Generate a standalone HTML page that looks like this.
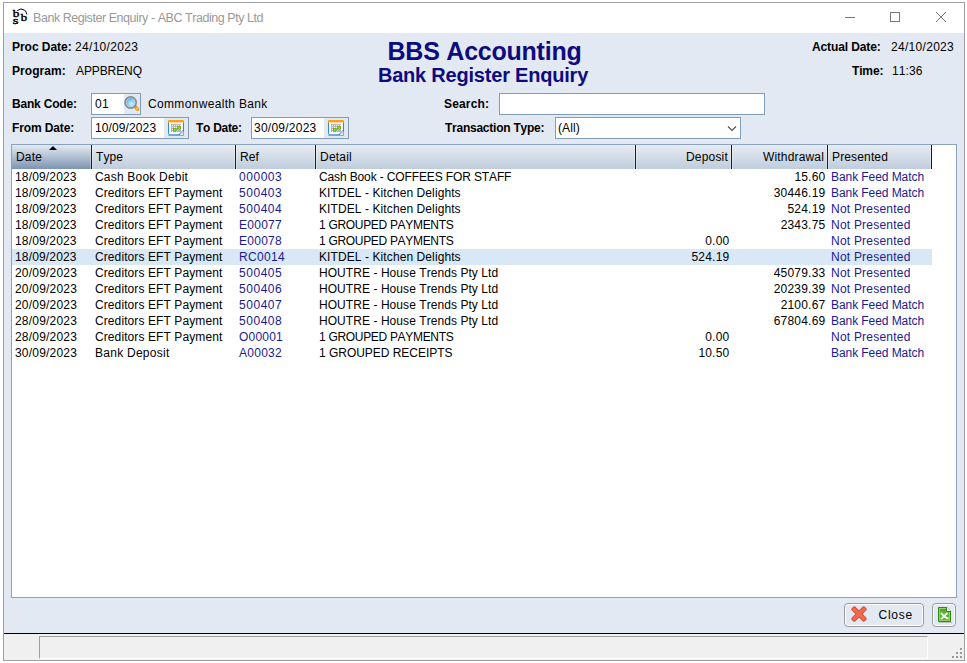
<!DOCTYPE html>
<html><head><meta charset="utf-8">
<style>
html,body{margin:0;padding:0;background:#fff;}
body{font-kerning:none;font-variant-ligatures:none;width:967px;height:663px;position:relative;overflow:hidden;font-family:"Liberation Sans",sans-serif;font-size:12px;color:#000;}
.a{position:absolute;white-space:nowrap;line-height:16px;}
.bd{font-weight:bold;}
#win{position:absolute;left:3px;top:2px;width:960px;height:657px;border:1px solid #a0a0a0;background:#fff;}
#panel{position:absolute;left:4px;top:33px;width:960px;height:600px;background:#e3e9f2;}
#status{position:absolute;left:4px;top:634px;width:960px;height:26px;background:#f0f0f0;}
#blk{position:absolute;left:4px;top:633px;width:960px;height:1px;background:#000;}
.inp{position:absolute;background:#fff;border:1px solid #7f9db9;box-sizing:border-box;}
.ibg{position:absolute;background:#e3e9f2;}
#tbl{position:absolute;left:11px;top:144px;width:946px;height:454px;box-sizing:border-box;border:1px solid #8ba3bf;background:#fff;overflow:hidden;}
.hs,.hn,.sep,.sel,.c{position:absolute;}
.hs{top:145px;height:24px;background:linear-gradient(#e4eaf2,#7d95b1);}
.hn{top:145px;height:24px;background:linear-gradient(#e6ebf2,#bfcddc);}
.sep{top:145px;width:1px;height:24px;background:#1a1a1a;box-shadow:-1px 0 0 rgba(255,255,255,0.3),1px 0 0 rgba(255,255,255,0.35);}
.sel{left:12px;width:920px;height:16px;background:#d8e8f6;}
.t{position:absolute;white-space:nowrap;line-height:16px;}
.b{color:#1c1c8e;}
.btn{position:absolute;box-sizing:border-box;border:1px solid #9a9a9a;border-radius:4px;box-shadow:inset 0 0 0 1px #fff;background:#e3e9f2;}
</style></head><body>
<div id="win"></div>
<!-- title -->
<svg style="position:absolute;left:8px;top:6px" width="24" height="22" viewBox="0 0 24 22">
 <g font-family="Liberation Serif" font-size="11" stroke="#000" stroke-width="0.45">
 <text transform="translate(4.7 10.9) scale(1.2 1)">b</text>
 <text transform="translate(4.8 17.7) scale(1.35 0.95)">s</text>
 <text transform="translate(12.8 14.7) scale(1.15 0.95)">b</text>
 </g>
 <path d="M9.3 4.6 Q13 1.6 16.5 4 Q18.3 5.6 18.9 8.5" fill="none" stroke="#000" stroke-width="1"/>
</svg>
<svg style="position:absolute;left:840px;top:6px" width="120" height="22">
 <line x1="5" y1="11.5" x2="15" y2="11.5" stroke="#777" stroke-width="1"/>
 <rect x="50.5" y="6.5" width="9" height="9" fill="none" stroke="#777" stroke-width="1"/>
 <line x1="96" y1="6" x2="106" y2="16" stroke="#777" stroke-width="1"/>
 <line x1="106" y1="6" x2="96" y2="16" stroke="#777" stroke-width="1"/>
</svg>
<div id="panel"></div>
<div id="blk"></div>
<div id="status"></div>
<div style="position:absolute;left:39px;top:636px;width:889px;height:23px;border-top:1px solid #a0a0a0;border-left:1px solid #a0a0a0;border-right:1px solid #fff;border-bottom:1px solid #fff;box-sizing:border-box;"></div>
<svg style="position:absolute;left:950px;top:646px" width="14" height="14">
 <g fill="#9a9a9a"><rect x="10" y="2" width="2" height="2"/><rect x="6" y="6" width="2" height="2"/><rect x="10" y="6" width="2" height="2"/><rect x="2" y="10" width="2" height="2"/><rect x="6" y="10" width="2" height="2"/><rect x="10" y="10" width="2" height="2"/></g>
</svg>

<!-- header info -->

<!-- filters -->
<div class="inp" style="left:91px;top:93px;width:50px;height:22px;"></div>
<div class="ibg" style="left:124px;top:94px;width:16px;height:20px;"></div>
<svg style="position:absolute;left:120px;top:92px" width="24" height="24" viewBox="0 0 24 24">
 <defs><radialGradient id="lg" cx="0.6" cy="0.65" r="0.75"><stop offset="0" stop-color="#c4f2ff"/><stop offset="0.55" stop-color="#8cd0f4"/><stop offset="1" stop-color="#3f97e0"/></radialGradient></defs>
 <path d="M15.3 14.8 L17.6 17.2" stroke="#e39a22" stroke-width="3.4" stroke-linecap="round"/>
 <circle cx="17" cy="16.5" r="0.9" fill="#ffd070"/>
 <circle cx="10.6" cy="10.5" r="5.6" fill="#fff" stroke="#8a8a8a" stroke-width="1.7"/>
 <circle cx="10.6" cy="10.5" r="4.4" fill="url(#lg)"/>
</svg>

<div class="inp" style="left:91px;top:117px;width:98px;height:22px;"></div>
<div class="ibg" style="left:164px;top:118px;width:24px;height:20px;"></div>
<svg style="position:absolute;left:168px;top:120px" width="16" height="16" viewBox="0 0 16 16">
 <rect x="0" y="15" width="16" height="1" fill="#b0b0b0"/>
 <rect x="0.5" y="1" width="15" height="13.8" rx="1.5" fill="#fff" stroke="#2f88cc"/>
 <rect x="0" y="0" width="16" height="3" rx="1.2" fill="#f9a11b"/>
 <rect x="1" y="2" width="14" height="1" fill="#ffd79a"/>
 <rect x="3" y="4" width="10" height="8" fill="#b4b4c4"/>
 <g fill="#f4f4ff"><rect x="4" y="5" width="1" height="1"/><rect x="6" y="5" width="1" height="1"/><rect x="8" y="5" width="1" height="1"/><rect x="4" y="7" width="1" height="1"/><rect x="6" y="7" width="1" height="1"/><rect x="8" y="7" width="1" height="1"/><rect x="4" y="9" width="1" height="1"/><rect x="10" y="5" width="1" height="1"/><rect x="12" y="5" width="1" height="1"/><rect x="10" y="9" width="1" height="1"/><rect x="12" y="9" width="1" height="1"/><rect x="4" y="11" width="1" height="1"/><rect x="8" y="11" width="1" height="1"/></g>
 <rect x="5" y="8" width="3.5" height="3.5" fill="#6cb400"/><rect x="6" y="9" width="1.5" height="1.5" fill="#b0e040"/>
 <rect x="9.3" y="6" width="3.5" height="3.5" fill="#6cb400"/><rect x="10.3" y="7" width="1.5" height="1.5" fill="#b0e040"/>
 <path d="M11 16 L16 11 L16 16 Z" fill="#a8a8a8"/>
 <path d="M10.5 15 L15.5 10" stroke="#2f88cc" stroke-width="1"/>
 <path d="M12 15 L15 12 L15 15 Z" fill="#e8e8e8"/>
</svg>
<div class="inp" style="left:251px;top:117px;width:98px;height:22px;"></div>
<div class="ibg" style="left:324px;top:118px;width:24px;height:20px;"></div>
<svg style="position:absolute;left:328px;top:120px" width="16" height="16" viewBox="0 0 16 16">
 <rect x="0" y="15" width="16" height="1" fill="#b0b0b0"/>
 <rect x="0.5" y="1" width="15" height="13.8" rx="1.5" fill="#fff" stroke="#2f88cc"/>
 <rect x="0" y="0" width="16" height="3" rx="1.2" fill="#f9a11b"/>
 <rect x="1" y="2" width="14" height="1" fill="#ffd79a"/>
 <rect x="3" y="4" width="10" height="8" fill="#b4b4c4"/>
 <g fill="#f4f4ff"><rect x="4" y="5" width="1" height="1"/><rect x="6" y="5" width="1" height="1"/><rect x="8" y="5" width="1" height="1"/><rect x="4" y="7" width="1" height="1"/><rect x="6" y="7" width="1" height="1"/><rect x="8" y="7" width="1" height="1"/><rect x="4" y="9" width="1" height="1"/><rect x="10" y="5" width="1" height="1"/><rect x="12" y="5" width="1" height="1"/><rect x="10" y="9" width="1" height="1"/><rect x="12" y="9" width="1" height="1"/><rect x="4" y="11" width="1" height="1"/><rect x="8" y="11" width="1" height="1"/></g>
 <rect x="5" y="8" width="3.5" height="3.5" fill="#6cb400"/><rect x="6" y="9" width="1.5" height="1.5" fill="#b0e040"/>
 <rect x="9.3" y="6" width="3.5" height="3.5" fill="#6cb400"/><rect x="10.3" y="7" width="1.5" height="1.5" fill="#b0e040"/>
 <path d="M11 16 L16 11 L16 16 Z" fill="#a8a8a8"/>
 <path d="M10.5 15 L15.5 10" stroke="#2f88cc" stroke-width="1"/>
 <path d="M12 15 L15 12 L15 15 Z" fill="#e8e8e8"/>
</svg>

<div class="inp" style="left:499px;top:93px;width:266px;height:22px;"></div>
<div class="inp" style="left:555px;top:117px;width:186px;height:22px;"></div>
<svg style="position:absolute;left:727px;top:125px" width="10" height="7"><path d="M1 1.5 L5 5.5 L9 1.5" fill="none" stroke="#505050" stroke-width="1.1"/></svg>

<!-- table -->
<div id="tbl"></div>
<div class="hs" style="left:12px;width:79px"></div>
<div class="hn" style="left:92px;width:143px"></div>
<div class="hn" style="left:236px;width:79px"></div>
<div class="hn" style="left:316px;width:319px"></div>
<div class="hn" style="left:636px;width:95px"></div>
<div class="hn" style="left:732px;width:95px"></div>
<div class="hn" style="left:828px;width:103px"></div>
<div class="sep" style="left:91px"></div>
<div class="sep" style="left:235px"></div>
<div class="sep" style="left:315px"></div>
<div class="sep" style="left:635px"></div>
<div class="sep" style="left:731px"></div>
<div class="sep" style="left:827px"></div>
<div class="sep" style="left:931px"></div>
<svg style="position:absolute;left:48px;top:145px" width="10" height="6"><path d="M1 5 L5 1 L9 5 Z" fill="#000"/></svg>
<div class="sel" style="top:249px"></div>
<div class="t" style="left:16px;top:149px;letter-spacing:0.163px">Date</div>
<div class="t" style="left:96px;top:149px;letter-spacing:0.081px">Type</div>
<div class="t" style="left:240px;top:149px;letter-spacing:0.109px">Ref</div>
<div class="t" style="left:320px;top:149px;letter-spacing:0.220px">Detail</div>
<div class="t" style="right:239px;top:149px;letter-spacing:0.188px">Deposit</div>
<div class="t" style="right:143px;top:149px;letter-spacing:0.165px">Withdrawal</div>
<div class="t" style="left:832px;top:149px;letter-spacing:0.144px">Presented</div>
<div class="t" style="left:15px;top:169px;letter-spacing:0.156px">18/09/2023</div>
<div class="t" style="left:95px;top:169px;letter-spacing:0.200px">Cash Book Debit</div>
<div class="t" style="left:239px;top:169px;color:#1a1a96;letter-spacing:0.540px">000003</div>
<div class="t" style="left:319px;top:169px;letter-spacing:-0.129px">Cash Book - COFFEES FOR STAFF</div>
<div class="t" style="right:141.6px;top:169px;letter-spacing:0.200px">15.60</div>
<div class="t" style="left:831px;top:169px;color:#1a1a96;letter-spacing:-0.071px">Bank Feed Match</div>
<div class="t" style="left:15px;top:185px;letter-spacing:0.156px">18/09/2023</div>
<div class="t" style="left:95px;top:185px;letter-spacing:0.095px">Creditors EFT Payment</div>
<div class="t" style="left:239px;top:185px;color:#1a1a96;letter-spacing:0.540px">500403</div>
<div class="t" style="left:319px;top:185px;letter-spacing:0.092px">KITDEL - Kitchen Delights</div>
<div class="t" style="right:141.6px;top:185px;letter-spacing:0.200px">30446.19</div>
<div class="t" style="left:831px;top:185px;color:#1a1a96;letter-spacing:-0.071px">Bank Feed Match</div>
<div class="t" style="left:15px;top:201px;letter-spacing:0.156px">18/09/2023</div>
<div class="t" style="left:95px;top:201px;letter-spacing:0.095px">Creditors EFT Payment</div>
<div class="t" style="left:239px;top:201px;color:#1a1a96;letter-spacing:0.540px">500404</div>
<div class="t" style="left:319px;top:201px;letter-spacing:0.092px">KITDEL - Kitchen Delights</div>
<div class="t" style="right:141.6px;top:201px;letter-spacing:0.200px">524.19</div>
<div class="t" style="left:831px;top:201px;color:#1a1a96;letter-spacing:0.217px">Not Presented</div>
<div class="t" style="left:15px;top:217px;letter-spacing:0.156px">18/09/2023</div>
<div class="t" style="left:95px;top:217px;letter-spacing:0.095px">Creditors EFT Payment</div>
<div class="t" style="left:239px;top:217px;color:#1a1a96;letter-spacing:0.271px">E00077</div>
<div class="t" style="left:319px;top:217px;letter-spacing:-0.312px">1 GROUPED PAYMENTS</div>
<div class="t" style="right:141.6px;top:217px;letter-spacing:0.200px">2343.75</div>
<div class="t" style="left:831px;top:217px;color:#1a1a96;letter-spacing:0.217px">Not Presented</div>
<div class="t" style="left:15px;top:233px;letter-spacing:0.156px">18/09/2023</div>
<div class="t" style="left:95px;top:233px;letter-spacing:0.095px">Creditors EFT Payment</div>
<div class="t" style="left:239px;top:233px;color:#1a1a96;letter-spacing:0.271px">E00078</div>
<div class="t" style="left:319px;top:233px;letter-spacing:-0.312px">1 GROUPED PAYMENTS</div>
<div class="t" style="right:237.6px;top:233px;letter-spacing:0.200px">0.00</div>
<div class="t" style="left:831px;top:233px;color:#1a1a96;letter-spacing:0.217px">Not Presented</div>
<div class="t" style="left:15px;top:249px;letter-spacing:0.156px">18/09/2023</div>
<div class="t" style="left:95px;top:249px;letter-spacing:0.095px">Creditors EFT Payment</div>
<div class="t" style="left:239px;top:249px;color:#1a1a96;letter-spacing:0.329px">RC0014</div>
<div class="t" style="left:319px;top:249px;letter-spacing:0.092px">KITDEL - Kitchen Delights</div>
<div class="t" style="right:237.6px;top:249px;letter-spacing:0.200px">524.19</div>
<div class="t" style="left:831px;top:249px;color:#1a1a96;letter-spacing:0.217px">Not Presented</div>
<div class="t" style="left:15px;top:265px;letter-spacing:0.194px">20/09/2023</div>
<div class="t" style="left:95px;top:265px;letter-spacing:0.095px">Creditors EFT Payment</div>
<div class="t" style="left:239px;top:265px;color:#1a1a96;letter-spacing:0.540px">500405</div>
<div class="t" style="left:319px;top:265px;letter-spacing:0.062px">HOUTRE - House Trends Pty Ltd</div>
<div class="t" style="right:141.6px;top:265px;letter-spacing:0.200px">45079.33</div>
<div class="t" style="left:831px;top:265px;color:#1a1a96;letter-spacing:0.217px">Not Presented</div>
<div class="t" style="left:15px;top:281px;letter-spacing:0.194px">20/09/2023</div>
<div class="t" style="left:95px;top:281px;letter-spacing:0.095px">Creditors EFT Payment</div>
<div class="t" style="left:239px;top:281px;color:#1a1a96;letter-spacing:0.540px">500406</div>
<div class="t" style="left:319px;top:281px;letter-spacing:0.062px">HOUTRE - House Trends Pty Ltd</div>
<div class="t" style="right:141.6px;top:281px;letter-spacing:0.200px">20239.39</div>
<div class="t" style="left:831px;top:281px;color:#1a1a96;letter-spacing:0.217px">Not Presented</div>
<div class="t" style="left:15px;top:297px;letter-spacing:0.194px">20/09/2023</div>
<div class="t" style="left:95px;top:297px;letter-spacing:0.095px">Creditors EFT Payment</div>
<div class="t" style="left:239px;top:297px;color:#1a1a96;letter-spacing:0.540px">500407</div>
<div class="t" style="left:319px;top:297px;letter-spacing:0.062px">HOUTRE - House Trends Pty Ltd</div>
<div class="t" style="right:141.6px;top:297px;letter-spacing:0.200px">2100.67</div>
<div class="t" style="left:831px;top:297px;color:#1a1a96;letter-spacing:-0.071px">Bank Feed Match</div>
<div class="t" style="left:15px;top:313px;letter-spacing:0.194px">28/09/2023</div>
<div class="t" style="left:95px;top:313px;letter-spacing:0.095px">Creditors EFT Payment</div>
<div class="t" style="left:239px;top:313px;color:#1a1a96;letter-spacing:0.540px">500408</div>
<div class="t" style="left:319px;top:313px;letter-spacing:0.062px">HOUTRE - House Trends Pty Ltd</div>
<div class="t" style="right:141.6px;top:313px;letter-spacing:0.200px">67804.69</div>
<div class="t" style="left:831px;top:313px;color:#1a1a96;letter-spacing:-0.071px">Bank Feed Match</div>
<div class="t" style="left:15px;top:329px;letter-spacing:0.194px">28/09/2023</div>
<div class="t" style="left:95px;top:329px;letter-spacing:0.095px">Creditors EFT Payment</div>
<div class="t" style="left:239px;top:329px;color:#1a1a96;letter-spacing:0.216px">O00001</div>
<div class="t" style="left:319px;top:329px;letter-spacing:-0.312px">1 GROUPED PAYMENTS</div>
<div class="t" style="right:237.6px;top:329px;letter-spacing:0.200px">0.00</div>
<div class="t" style="left:831px;top:329px;color:#1a1a96;letter-spacing:0.217px">Not Presented</div>
<div class="t" style="left:15px;top:345px;letter-spacing:0.194px">30/09/2023</div>
<div class="t" style="left:95px;top:345px;letter-spacing:0.264px">Bank Deposit</div>
<div class="t" style="left:239px;top:345px;color:#1a1a96;letter-spacing:0.271px">A00032</div>
<div class="t" style="left:319px;top:345px;letter-spacing:-0.029px">1 GROUPED RECEIPTS</div>
<div class="t" style="right:237.6px;top:345px;letter-spacing:0.200px">10.50</div>
<div class="t" style="left:831px;top:345px;color:#1a1a96;letter-spacing:-0.071px">Bank Feed Match</div>

<!-- buttons -->
<div class="btn" style="left:844px;top:603px;width:80px;height:24px;"></div>
<svg style="position:absolute;left:851px;top:606px" width="16" height="16" viewBox="0 0 16 16">
 <g transform="translate(8 8) rotate(45)">
  <g fill="#d8432a"><rect x="-9.2" y="-2.6" width="18.4" height="5.2" rx="1.8"/><rect x="-2.6" y="-9.2" width="5.2" height="18.4" rx="1.8"/></g>
  <g fill="#ef6a50"><rect x="-8.4" y="-1.8" width="16.8" height="3.6" rx="1.2"/><rect x="-1.8" y="-8.4" width="3.6" height="16.8" rx="1.2"/></g>
 </g>
</svg>
<div class="btn" style="left:932px;top:603px;width:24px;height:24px;"></div>
<svg style="position:absolute;left:937px;top:606px" width="16" height="18" viewBox="0 0 16 18">
 <rect x="2" y="16" width="13" height="1" fill="#9aa89a" opacity="0.6"/>
 <path d="M1.5 1.5 L10 1.5 L13.5 5 L13.5 15.5 L1.5 15.5 Z" fill="#62b03a" stroke="#2f8a12"/>
 <path d="M2.5 2.5 L9.5 2.5 L12.5 5.5 L12.5 14.5 L2.5 14.5 Z" fill="none" stroke="#92d268" stroke-width="1"/>
 <path d="M3 3 L9 3 L9 5 L3 5 Z" fill="#4e9a2a" opacity="0.6"/>
 <path d="M10 1.2 L13.8 5 L10 5 Z" fill="#fff"/>
 <path d="M9.5 1.5 L9.5 5.5 L13.5 5.5" fill="none" stroke="#2f8a12" stroke-width="1"/>
 <path d="M4.5 7.5 L6.8 10 M9.8 7.5 L4.6 12.6 M7.6 10.8 L10.6 12.4" stroke="#fff" stroke-width="1.7" stroke-linecap="square"/>
</svg>
<div class="t" style="left:12px;top:39px;font-weight:bold;letter-spacing:-0.038px">Proc Date:</div>
<div class="t" style="left:75px;top:39px;letter-spacing:0.316px">24/10/2023</div>
<div class="t" style="left:12px;top:63px;font-weight:bold;letter-spacing:0.057px">Program:</div>
<div class="t" style="left:76px;top:63px;letter-spacing:-0.100px">APPBRENQ</div>
<div class="t" style="left:4px;top:36px;font-size:25px;line-height:30px;font-weight:bold;color:#0e0a80;letter-spacing:-0.230px;width:961px;text-align:center">BBS Accounting</div>
<div class="t" style="left:2.5px;top:63px;font-size:20px;line-height:24px;font-weight:bold;color:#0e0a80;letter-spacing:-0.210px;width:961px;text-align:center">Bank Register Enquiry</div>
<div class="t" style="left:812px;top:39px;font-weight:bold;letter-spacing:-0.114px">Actual Date:</div>
<div class="t" style="left:891px;top:39px;letter-spacing:0.300px">24/10/2023</div>
<div class="t" style="left:852px;top:63px;font-weight:bold;letter-spacing:-0.150px">Time:</div>
<div class="t" style="left:892px;top:63px;letter-spacing:0.075px">11:36</div>
<div class="t" style="left:12px;top:96px;font-weight:bold;letter-spacing:-0.194px">Bank Code:</div>
<div class="t" style="left:95px;top:96px;letter-spacing:0.326px">01</div>
<div class="t" style="left:148px;top:96px;letter-spacing:0.331px">Commonwealth Bank</div>
<div class="t" style="left:12px;top:120px;font-weight:bold;letter-spacing:-0.117px">From Date:</div>
<div class="t" style="left:95px;top:120px;letter-spacing:0.111px">10/09/2023</div>
<div class="t" style="left:196px;top:120px;font-weight:bold;letter-spacing:-0.286px">To Date:</div>
<div class="t" style="left:254px;top:120px;letter-spacing:0.244px">30/09/2023</div>
<div class="t" style="left:444px;top:96px;font-weight:bold;letter-spacing:0.158px">Search:</div>
<div class="t" style="left:445px;top:120px;font-weight:bold;letter-spacing:-0.247px">Transaction Type:</div>
<div class="t" style="left:558px;top:120px;letter-spacing:0.100px">(All)</div>
<div class="t" style="left:878.5px;top:607px;color:#000;letter-spacing:0.725px">Close</div>
<div class="t" style="left:33px;top:9.5px;font-size:12.5px;color:#999;letter-spacing:-0.450px">Bank Register Enquiry - ABC Trading Pty Ltd</div>
</body></html>
